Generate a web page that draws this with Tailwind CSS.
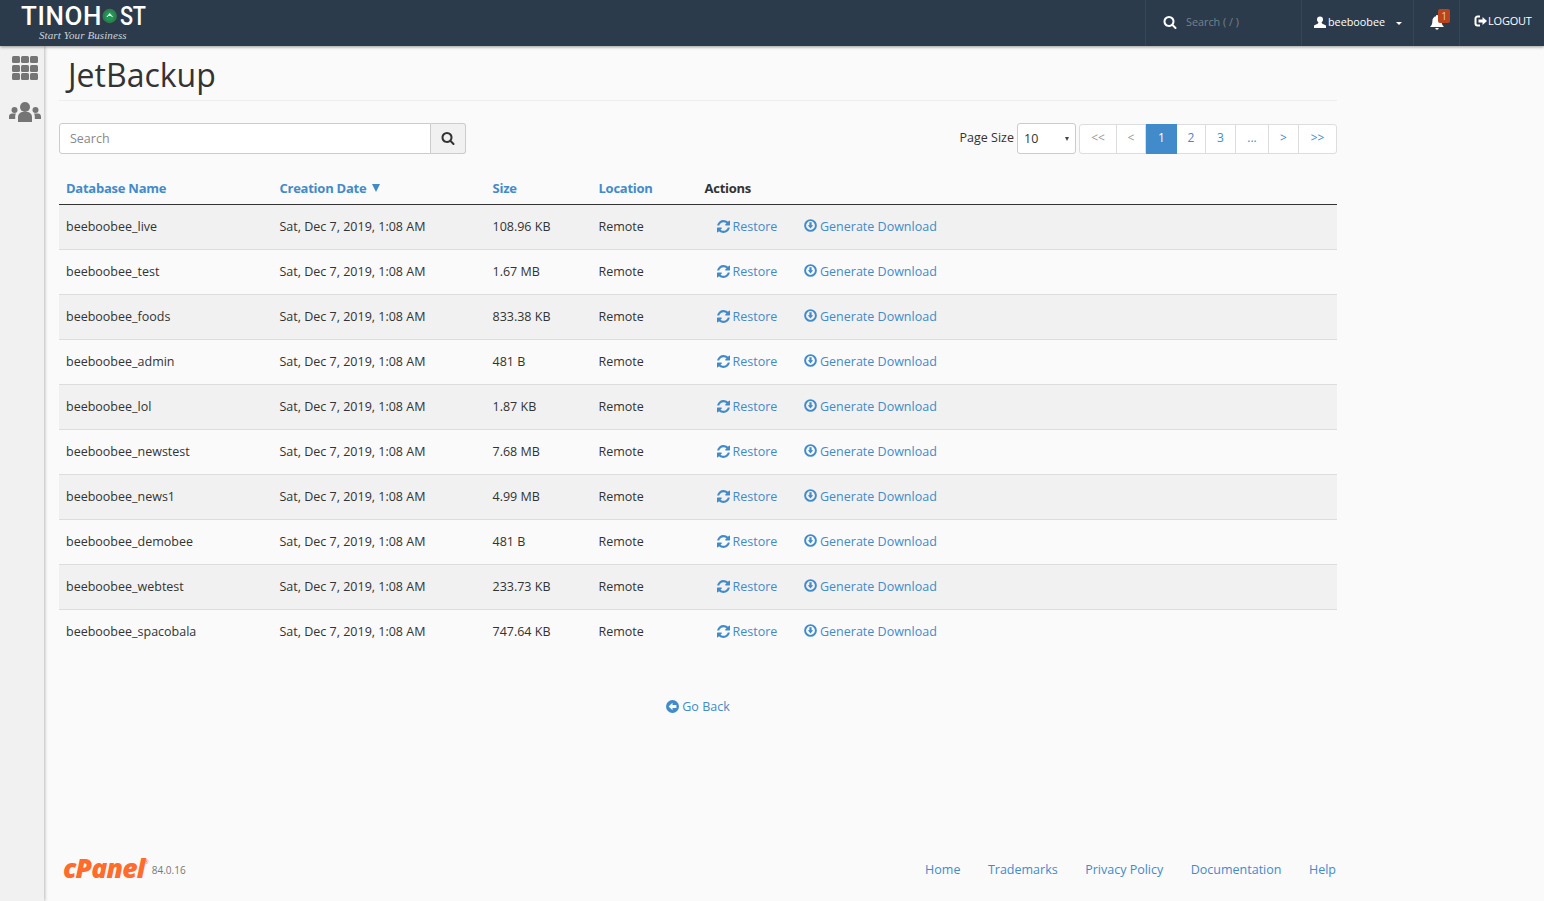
<!DOCTYPE html>
<html lang="en">
<head>
  <meta charset="UTF-8" />
  <title>JetBackup</title>
  <script src="https://cdn.jsdelivr.net/npm/@tailwindcss/browser@4"></script>
</head>
<body class="h-[901px] overflow-hidden bg-[#fafafa] font-['Open_Sans',sans-serif] text-[12.5px] text-[#333]">
  <svg class="hidden">
    <defs>
      <symbol id="refresh" viewBox="128 128 1536 1536"><path fill="currentColor" d="M1639 1056q0 5-1 7-64 268-268 434.500t-478 166.500q-146 0-282.500-55t-243.500-157l-129 129q-19 19-45 19t-45-19-19-45v-448q0-26 19-45t45-19h448q26 0 45 19t19 45-19 45l-137 137q71 66 161 102t187 36q134 0 250-65t186-179q11-17 53-117 8-23 30-23h192q13 0 22.500 9.500t9.500 22.500zm25-800v448q0 26-19 45t-45 19h-448q-26 0-45-19t-19-45 19-45l138-138q-148-137-349-137-134 0-250 65t-186 179q-11 17-53 117-8 23-30 23h-199q-13 0-22.500-9.500t-9.500-22.500v-7q65-268 270-434.500t480-166.500q146 0 284 55.500t245 156.500l130-129q19-19 45-19t45 19 19 45z"/></symbol>
      <symbol id="down" viewBox="0 0 14 14"><circle cx="7" cy="7" r="5.800" fill="none" stroke="currentColor" stroke-width="2.100"/><path fill="currentColor" d="M5.800 3.500h2.400v3.300h1.700L7 10.200 4.100 6.800h1.700z"/></symbol>
      <symbol id="search" viewBox="0 0 1792 1792"><path fill="currentColor" d="M1216 832q0-185-131.500-316.500t-316.500-131.500-316.500 131.500-131.500 316.500 131.500 316.500 316.500 131.500 316.500-131.500 131.500-316.500zm512 832q0 52-38 90t-90 38q-54 0-90-38l-343-342q-179 124-399 124-143 0-273.500-55.500t-225-150-150-225-55.500-273.500 55.500-273.500 150-225 225-150 273.500-55.500 273.500 55.500 225 150 150 225 55.500 273.500q0 220-124 399l343 343q37 37 37 90z"/></symbol>
    </defs>
  </svg>

  <header class="relative z-10 flex h-[46px] items-stretch justify-between bg-[#2b3b4c] text-white shadow-[0_1px_3px_rgba(0,0,0,0.4)]">
    <div class="ml-[21px] flex w-[130px] flex-col">
      <div class="flex h-[31px] items-center font-['Roboto',sans-serif] text-[26px] leading-none font-medium tracking-[0.6px] whitespace-nowrap">
        TINOH<svg class="mr-[3px] h-[16px] w-[16px]" viewBox="0 0 16 16"><circle cx="8" cy="8" r="7.500" fill="#2f7d4e"/><circle cx="8" cy="8" r="5" fill="#1f9a55"/><path fill="#e8f5e9" d="M4.500 9 8 5l3.500 4H9.800V8H6.200v1z"/></svg><span class="inline-block origin-left scale-x-[0.83] tracking-[-0.5px]">ST</span>
      </div>
      <div class="-mt-[1px] ml-[18px] font-['Liberation_Serif',serif] text-[11px] leading-[10px] tracking-[0.1px] text-[#ccd3d9] italic">Start Your Business</div>
    </div>
    <div class="flex items-stretch">
      <div class="flex w-[157px] items-center border-x border-[#33475a] pb-[2px] pl-[17px]">
        <svg class="h-[14px] w-[14px] text-white"><use href="#search"/></svg>
        <span class="ml-[9px] text-[10.8px] text-[#75818d]">Search ( / )</span>
      </div>
      <div class="flex w-[112px] items-center border-r border-[#33475a] pb-[2px] pl-[12px]">
        <svg class="h-[12px] w-[12px]" viewBox="0 0 12 12"><circle cx="6" cy="3.500" r="3" fill="#fff"/><path fill="#fff" d="M4.500 6h3l.5 1.500L12 9.500V12H0V9.500l4-2z"/></svg>
        <span class="ml-[2px] text-[10.8px]">beeboobee</span>
        <span class="ml-[11px] mt-[3px] h-0 w-0 border-x-[3px] border-t-[3px] border-x-transparent border-t-white"></span>
      </div>
      <div class="relative flex w-[46px] items-center border-r border-[#33475a] pb-[2px] pl-[16px]">
        <svg class="h-[15px] w-[14px]" viewBox="0 0 14 15"><path fill="#fff" d="M7 0a1 1 0 0 1 1 1.200c2.300.5 3.600 2.300 3.600 4.800 0 3 .8 4.500 2.400 6H0c1.600-1.500 2.400-3 2.400-6 0-2.500 1.300-4.300 3.600-4.800A1 1 0 0 1 7 0zM5.300 13h3.400a1.700 1.700 0 0 1-3.400 0z"/></svg>
        <span class="absolute top-[9px] left-[24px] flex h-[14px] w-[12px] items-center justify-center rounded-[2px] bg-[#b8431c] text-[10px] leading-none text-[#e8c9bd]">1</span>
      </div>
      <div class="flex w-[84px] items-center pb-[4px] pl-[14px]">
        <svg class="mr-[1px] h-[12px] w-[13px]" viewBox="0 0 13 12"><path fill="none" stroke="#fff" stroke-width="2" d="M6 1.500H3.500A2 2 0 0 0 1.500 3.500v5a2 2 0 0 0 2 2H6"/><path fill="#fff" d="M4.500 4.500h4V2l4.500 4-4.500 4V7.500h-4z"/></svg>
        <span class="text-[11px] tracking-[-0.2px]">LOGOUT</span>
      </div>
    </div>
  </header>

  <div class="flex h-[855px]">
    <aside class="flex w-[44px] shrink-0 flex-col items-center bg-[#f1f1f1] pt-[10px] shadow-[1px_0_3px_rgba(0,0,0,0.25)]">
      <div class="ml-[6px] grid w-[26px] grid-cols-3 gap-[1.500px]">
        <span class="h-[7px] rounded-[1.500px] bg-[#757575]"></span><span class="h-[7px] rounded-[1.500px] bg-[#757575]"></span><span class="h-[7px] rounded-[1.500px] bg-[#757575]"></span>
        <span class="h-[7px] rounded-[1.500px] bg-[#757575]"></span><span class="h-[7px] rounded-[1.500px] bg-[#757575]"></span><span class="h-[7px] rounded-[1.500px] bg-[#757575]"></span>
        <span class="h-[7px] rounded-[1.500px] bg-[#757575]"></span><span class="h-[7px] rounded-[1.500px] bg-[#757575]"></span><span class="h-[7px] rounded-[1.500px] bg-[#757575]"></span>
      </div>
      <svg class="mt-[22px] ml-[5px] h-[20px] w-[32px]" viewBox="0 0 32 20" fill="#757575">
        <circle cx="16" cy="5" r="5"/><path d="M9 20v-5c0-3 2.500-5 5-5h4c2.500 0 5 2 5 5v5z"/>
        <circle cx="5.500" cy="8" r="3"/><path d="M0 17v-2.500C0 12.500 1.500 11.500 3 11.500h4c-.5 1-.8 2-.8 3.500v2z"/>
        <circle cx="26.500" cy="8" r="3"/><path d="M32 17v-2.500c0-2-1.500-3-3-3h-4c.5 1 .8 2 .8 3.500v2z"/>
      </svg>
    </aside>

    <main class="ml-[15px] flex w-[1278px] flex-col">
      <h1 class="mt-[8px] h-[47px] border-b border-[#eee] pl-[9px] text-[32px] leading-[42px] text-[#333]">JetBackup</h1>

      <div class="mt-[22px] flex h-[31px] items-center justify-between">
        <div class="flex h-[31px] w-[407px]">
          <div class="flex w-[372px] items-center rounded-l-[3px] border border-[#ccc] bg-white pt-[1px] pl-[10px] text-[#888]">Search</div>
          <div class="flex w-[35px] items-center justify-center rounded-r-[3px] border border-l-0 border-[#ccc] bg-[#f1f1f1] pb-[2px] text-[#333]"><svg class="h-[14px] w-[14px]"><use href="#search"/></svg></div>
        </div>
        <div class="flex items-center">
          <span class="mr-[3px]">Page Size</span>
          <div class="flex h-[31px] w-[59px] items-center justify-between rounded-[3px] border border-[#ccc] bg-white pt-[1px] pr-[6px] pl-[6px]">10<span class="h-0 w-0 border-x-[2.500px] border-t-[4px] border-x-transparent border-t-[#444]"></span></div>
          <nav class="ml-[3px] flex h-[30px] rounded-[3px] border border-[#ddd] bg-white text-[12px] text-[#428bca]">
            <span class="flex w-[37px] items-center justify-center border-r border-[#ddd] pb-[1px] text-[#999]">&lt;&lt;</span>
            <span class="flex w-[29px] items-center justify-center border-r border-[#ddd] pb-[1px] text-[#999]">&lt;</span>
            <span class="-my-px flex w-[31px] items-center justify-center bg-[#428bca] pb-[1px] text-white">1</span>
            <span class="flex w-[29px] items-center justify-center border-r border-[#ddd] pb-[1px]">2</span>
            <span class="flex w-[30px] items-center justify-center border-r border-[#ddd] pb-[1px]">3</span>
            <span class="flex w-[33px] items-center justify-center border-r border-[#ddd] pb-[1px]">...</span>
            <span class="flex w-[30px] items-center justify-center border-r border-[#ddd] pb-[1px]">&gt;</span>
            <span class="flex w-[37px] items-center justify-center pb-[1px]">&gt;&gt;</span>
          </nav>
        </div>
      </div>

      <table class="mt-[20px] w-full table-fixed border-collapse text-left [&_td]:pt-[2px]">
        <colgroup><col class="w-[213.5px]"/><col class="w-[213px]"/><col class="w-[106px]"/><col class="w-[106px]"/><col class="w-[106.5px]"/><col/></colgroup>
        <thead>
          <tr class="h-[30px] border-b border-[#333] text-[13px] font-bold text-[#428bca]">
            <th class="pb-[1px] pl-[7px] tracking-[-0.25px]">Database Name</th>
            <th class="pb-[1px] pl-[7px] tracking-[-0.25px]"><span class="flex items-center gap-[6px]">Creation Date <span class="h-0 w-0 border-x-[4.500px] border-t-[8px] border-x-transparent border-t-[#428bca]"></span></span></th>
            <th class="pb-[1px] pl-[7px] tracking-[-0.25px]">Size</th>
            <th class="pb-[1px] pl-[7px] tracking-[-0.25px]">Location</th>
            <th class="pb-[1px] pl-[7px] tracking-[-0.25px] text-[#333]" colspan="2">Actions</th>
          </tr>
        </thead>
        <tbody>
          <tr class="h-[45px] border-b border-[#ddd] bg-[#f1f1f1]"><td class="pl-[7px]">beeboobee_live</td><td class="pl-[7px]">Sat, Dec 7, 2019, 1:08 AM</td><td class="pl-[7px]">108.96 KB</td><td class="pl-[7px]">Remote</td><td class="pl-[19px] text-[#428bca]"><span class="flex items-center gap-[3px]"><svg class="-mt-[2px] h-[13px] w-[13px]"><use href="#refresh"/></svg>Restore</span></td><td class="text-[#428bca]"><span class="flex items-center gap-[3px]"><svg class="-mt-[4px] h-[13px] w-[13px]"><use href="#down"/></svg>Generate Download</span></td></tr>
          <tr class="h-[45px] border-b border-[#ddd]"><td class="pl-[7px]">beeboobee_test</td><td class="pl-[7px]">Sat, Dec 7, 2019, 1:08 AM</td><td class="pl-[7px]">1.67 MB</td><td class="pl-[7px]">Remote</td><td class="pl-[19px] text-[#428bca]"><span class="flex items-center gap-[3px]"><svg class="-mt-[2px] h-[13px] w-[13px]"><use href="#refresh"/></svg>Restore</span></td><td class="text-[#428bca]"><span class="flex items-center gap-[3px]"><svg class="-mt-[4px] h-[13px] w-[13px]"><use href="#down"/></svg>Generate Download</span></td></tr>
          <tr class="h-[45px] border-b border-[#ddd] bg-[#f1f1f1]"><td class="pl-[7px]">beeboobee_foods</td><td class="pl-[7px]">Sat, Dec 7, 2019, 1:08 AM</td><td class="pl-[7px]">833.38 KB</td><td class="pl-[7px]">Remote</td><td class="pl-[19px] text-[#428bca]"><span class="flex items-center gap-[3px]"><svg class="-mt-[2px] h-[13px] w-[13px]"><use href="#refresh"/></svg>Restore</span></td><td class="text-[#428bca]"><span class="flex items-center gap-[3px]"><svg class="-mt-[4px] h-[13px] w-[13px]"><use href="#down"/></svg>Generate Download</span></td></tr>
          <tr class="h-[45px] border-b border-[#ddd]"><td class="pl-[7px]">beeboobee_admin</td><td class="pl-[7px]">Sat, Dec 7, 2019, 1:08 AM</td><td class="pl-[7px]">481 B</td><td class="pl-[7px]">Remote</td><td class="pl-[19px] text-[#428bca]"><span class="flex items-center gap-[3px]"><svg class="-mt-[2px] h-[13px] w-[13px]"><use href="#refresh"/></svg>Restore</span></td><td class="text-[#428bca]"><span class="flex items-center gap-[3px]"><svg class="-mt-[4px] h-[13px] w-[13px]"><use href="#down"/></svg>Generate Download</span></td></tr>
          <tr class="h-[45px] border-b border-[#ddd] bg-[#f1f1f1]"><td class="pl-[7px]">beeboobee_lol</td><td class="pl-[7px]">Sat, Dec 7, 2019, 1:08 AM</td><td class="pl-[7px]">1.87 KB</td><td class="pl-[7px]">Remote</td><td class="pl-[19px] text-[#428bca]"><span class="flex items-center gap-[3px]"><svg class="-mt-[2px] h-[13px] w-[13px]"><use href="#refresh"/></svg>Restore</span></td><td class="text-[#428bca]"><span class="flex items-center gap-[3px]"><svg class="-mt-[4px] h-[13px] w-[13px]"><use href="#down"/></svg>Generate Download</span></td></tr>
          <tr class="h-[45px] border-b border-[#ddd]"><td class="pl-[7px]">beeboobee_newstest</td><td class="pl-[7px]">Sat, Dec 7, 2019, 1:08 AM</td><td class="pl-[7px]">7.68 MB</td><td class="pl-[7px]">Remote</td><td class="pl-[19px] text-[#428bca]"><span class="flex items-center gap-[3px]"><svg class="-mt-[2px] h-[13px] w-[13px]"><use href="#refresh"/></svg>Restore</span></td><td class="text-[#428bca]"><span class="flex items-center gap-[3px]"><svg class="-mt-[4px] h-[13px] w-[13px]"><use href="#down"/></svg>Generate Download</span></td></tr>
          <tr class="h-[45px] border-b border-[#ddd] bg-[#f1f1f1]"><td class="pl-[7px]">beeboobee_news1</td><td class="pl-[7px]">Sat, Dec 7, 2019, 1:08 AM</td><td class="pl-[7px]">4.99 MB</td><td class="pl-[7px]">Remote</td><td class="pl-[19px] text-[#428bca]"><span class="flex items-center gap-[3px]"><svg class="-mt-[2px] h-[13px] w-[13px]"><use href="#refresh"/></svg>Restore</span></td><td class="text-[#428bca]"><span class="flex items-center gap-[3px]"><svg class="-mt-[4px] h-[13px] w-[13px]"><use href="#down"/></svg>Generate Download</span></td></tr>
          <tr class="h-[45px] border-b border-[#ddd]"><td class="pl-[7px]">beeboobee_demobee</td><td class="pl-[7px]">Sat, Dec 7, 2019, 1:08 AM</td><td class="pl-[7px]">481 B</td><td class="pl-[7px]">Remote</td><td class="pl-[19px] text-[#428bca]"><span class="flex items-center gap-[3px]"><svg class="-mt-[2px] h-[13px] w-[13px]"><use href="#refresh"/></svg>Restore</span></td><td class="text-[#428bca]"><span class="flex items-center gap-[3px]"><svg class="-mt-[4px] h-[13px] w-[13px]"><use href="#down"/></svg>Generate Download</span></td></tr>
          <tr class="h-[45px] border-b border-[#ddd] bg-[#f1f1f1]"><td class="pl-[7px]">beeboobee_webtest</td><td class="pl-[7px]">Sat, Dec 7, 2019, 1:08 AM</td><td class="pl-[7px]">233.73 KB</td><td class="pl-[7px]">Remote</td><td class="pl-[19px] text-[#428bca]"><span class="flex items-center gap-[3px]"><svg class="-mt-[2px] h-[13px] w-[13px]"><use href="#refresh"/></svg>Restore</span></td><td class="text-[#428bca]"><span class="flex items-center gap-[3px]"><svg class="-mt-[4px] h-[13px] w-[13px]"><use href="#down"/></svg>Generate Download</span></td></tr>
          <tr class="h-[45px]"><td class="pl-[7px]">beeboobee_spacobala</td><td class="pl-[7px]">Sat, Dec 7, 2019, 1:08 AM</td><td class="pl-[7px]">747.64 KB</td><td class="pl-[7px]">Remote</td><td class="pl-[19px] text-[#428bca]"><span class="flex items-center gap-[3px]"><svg class="-mt-[2px] h-[13px] w-[13px]"><use href="#refresh"/></svg>Restore</span></td><td class="text-[#428bca]"><span class="flex items-center gap-[3px]"><svg class="-mt-[4px] h-[13px] w-[13px]"><use href="#down"/></svg>Generate Download</span></td></tr>
        </tbody>
      </table>

      <div class="mt-[44px] flex items-center justify-center gap-[3px] text-[#428bca]">
        <svg class="-mt-[2px] h-[13px] w-[13px]" viewBox="0 0 14 14"><circle cx="7" cy="7" r="7" fill="currentColor"/><path fill="#fff" d="M2.800 7 7 3v2.500h4.200v3H7V11z"/></svg>Go Back
      </div>

      <footer class="mt-auto flex h-[46px] items-start justify-between">
        <div class="ml-[4px] flex items-center">
          <span class="text-[26.5px] leading-[27px] font-extrabold tracking-[-0.8px] text-[#ff6c2c] italic">cPanel</span>
          <span class="mb-[12px] text-[5px] text-[#ff6c2c]">®</span>
          <span class="mt-[3px] ml-[3px] text-[10px] text-[#777]">84.0.16</span>
        </div>
        <div class="mt-[6px] flex gap-[27.500px] pr-[1px] text-[#428bca]">
          <span>Home</span><span>Trademarks</span><span>Privacy Policy</span><span>Documentation</span><span>Help</span>
        </div>
      </footer>
    </main>
  </div>
</body>
</html>
